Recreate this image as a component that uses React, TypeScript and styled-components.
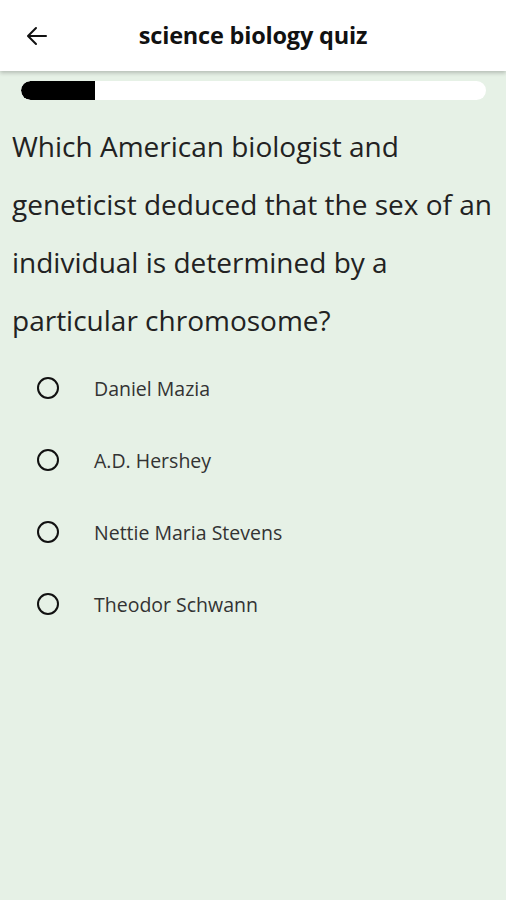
import styled, { createGlobalStyle } from "styled-components";

const GlobalStyle = createGlobalStyle`
  html, body {
    margin: 0;
    padding: 0;
    background: #e6f1e6;
    font-family: "Open Sans", "Noto Sans", sans-serif;
  }
`;

const Screen = styled.div`
  width: 506px;
  min-height: 900px;
  background: #e6f1e6;
  display: flex;
  flex-direction: column;
`;

const Header = styled.header`
  height: 71px;
  background: #ffffff;
  box-shadow: 0 2px 4px rgba(0, 0, 0, 0.22);
  display: flex;
  align-items: center;
  position: relative;
  z-index: 1;
`;

const BackButton = styled.button`
  width: 72px;
  height: 71px;
  border: none;
  background: transparent;
  padding: 0 0 0 25px;
  display: flex;
  align-items: center;
  cursor: pointer;
`;

const Title = styled.h1`
  flex: 1;
  margin: 0 72px 0 0;
  padding-bottom: 2px;
  text-align: center;
  font-size: 23.5px;
  font-weight: 700;
  color: #111;
  letter-spacing: -0.2px;
`;

const Body = styled.main`
  display: flex;
  flex-direction: column;
  padding: 10px 0 0 0;
`;

const Track = styled.div`
  margin: 0 20px 0 21px;
  height: 19px;
  border-radius: 10px;
  background: #ffffff;
  overflow: hidden;
`;

const Fill = styled.div`
  height: 100%;
  background: #000;
  border-radius: 10px 0 0 10px;
`;

const Question = styled.p`
  margin: 17px 8px 0 12px;
  font-size: 28px;
  line-height: 58px;
  color: #222;
  font-weight: 400;
`;

const Options = styled.ul`
  list-style: none;
  margin: 3px 0 0 0;
  padding: 0 0 0 37px;
  display: flex;
  flex-direction: column;
`;

const Option = styled.li`
  height: 72px;
  display: flex;
  align-items: center;
  gap: 35px;
`;

const Radio = styled.span`
  width: 18px;
  height: 18px;
  border: 2px solid #111;
  border-radius: 50%;
  flex-shrink: 0;
`;

const OptionLabel = styled.span`
  font-size: 19.5px;
  color: #333;
`;

const answers = ["Daniel Mazia", "A.D. Hershey", "Nettie Maria Stevens", "Theodor Schwann"];

export default function App() {
  const progress = 16;
  return (
    <Screen>
      <GlobalStyle />
      <Header>
        <BackButton aria-label="back">
          <svg width="24" height="24" viewBox="0 0 24 24" fill="none" stroke="#111" strokeWidth="2" strokeLinecap="round" strokeLinejoin="round">
            <path d="M21 12H4" />
            <path d="M11 4l-8 8 8 8" />
          </svg>
        </BackButton>
        <Title>science biology quiz</Title>
      </Header>
      <Body>
        <Track>
          <Fill style={{ width: `${progress}%` }} />
        </Track>
        <Question>
          Which American biologist and geneticist deduced that the sex of an individual is determined by a particular chromosome?
        </Question>
        <Options>
          {answers.map((a) => (
            <Option key={a}>
              <Radio />
              <OptionLabel>{a}</OptionLabel>
            </Option>
          ))}
        </Options>
      </Body>
    </Screen>
  );
}
